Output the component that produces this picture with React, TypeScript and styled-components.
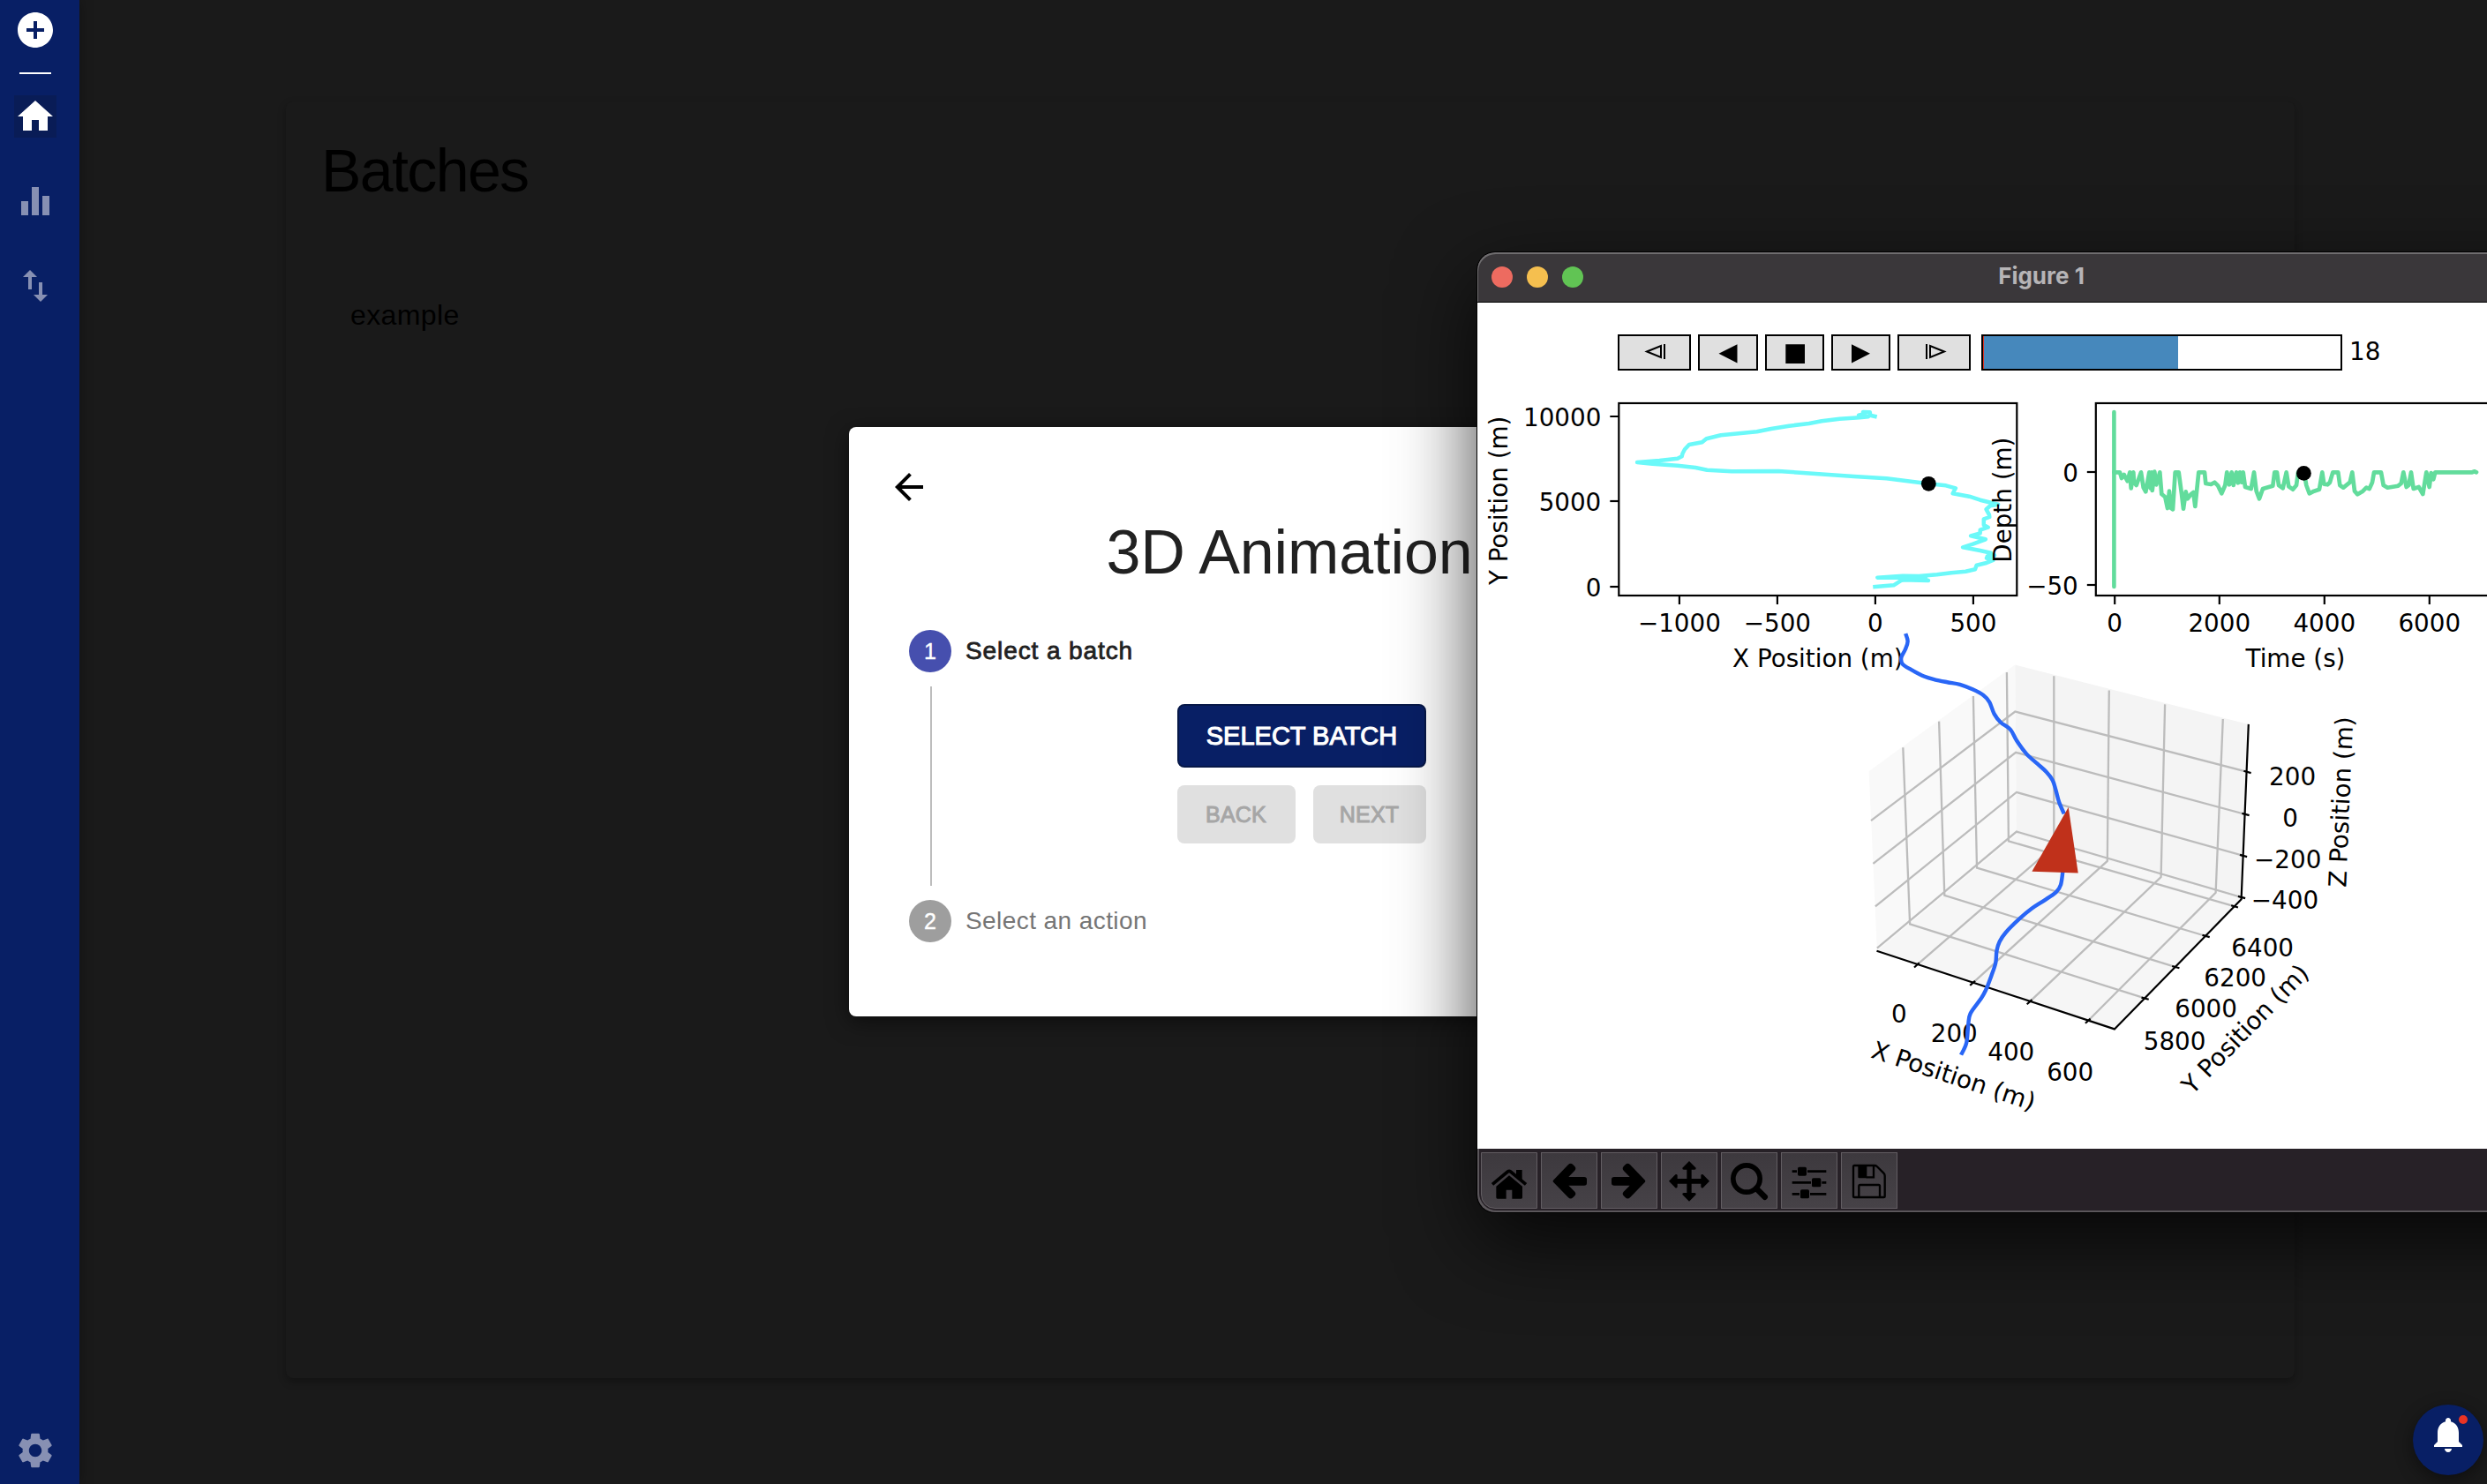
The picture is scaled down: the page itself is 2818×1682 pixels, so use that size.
import React from "react";
import styled, { createGlobalStyle } from "styled-components";

const GlobalStyle = createGlobalStyle`
  * { box-sizing: border-box; }
  html, body { margin: 0; padding: 0; background: #1a1a1a; overflow: hidden; }
  body { font-family: "Liberation Sans", Arial, sans-serif; }
`;

const NAVY = "#081f65";

const Shell = styled.div`
  position: relative;
  display: flex;
  width: 2818px;
  height: 1682px;
  overflow: hidden;
  background: #1a1a1a;
`;

/* ---------- Sidebar ---------- */

const Sidebar = styled.nav`
  display: flex;
  flex-direction: column;
  align-items: center;
  flex: none;
  width: 90px;
  padding: 10px 10px 14px 0;
  background: ${NAVY};
  box-shadow: 0 0 14px rgba(0, 0, 0, 0.35);
`;

const NavItem = styled.button<{ $active?: boolean; $gap?: number }>`
  display: flex;
  width: 48px;
  height: 48px;
  margin: ${(p) => p.$gap ?? 0}px 0 0;
  padding: 0;
  border: 0;
  color: ${(p) => (p.$active === false ? "#8790b3" : "#fff")};
  background: ${(p) => (p.$active ? "#091c56" : "transparent")};
`;

const NavDivider = styled.hr`
  width: 36px;
  height: 2px;
  margin: 24px 0 0;
  border: 0;
  background: #fff;
`;

const NavSpacer = styled.div`
  flex: 1;
`;

const Glyph = styled.svg<{ $size?: number }>`
  display: block;
  flex: none;
  width: ${(p) => p.$size ?? 48}px;
  height: ${(p) => p.$size ?? 48}px;
  fill: currentColor;
`;

const Icon = ({ d, size }: { d: string; size?: number }) => (
  <Glyph viewBox="0 0 24 24" $size={size}>
    <path d={d} />
  </Glyph>
);

const icons = {
  add: "M12 2C6.48 2 2 6.48 2 12s4.48 10 10 10 10-4.48 10-10S17.52 2 12 2zm5 11h-4v4h-2v-4H7v-2h4V7h2v4h4v2z",
  home: "M10 20v-6h4v6h5v-8h3L12 3 2 12h3v8z",
  bars: "M10 20h4V4h-4v16zm-6 0h4v-8H4v8zM16 9v11h4V9h-4z",
  swap: "M16 17.01V10h-2v7.01h-3L15 21l4-3.99h-3zM9 3L5 6.99h3V14h2V6.99h3L9 3z",
  gear: "M19.14 12.94c.04-.3.06-.61.06-.94 0-.32-.02-.64-.07-.94l2.03-1.58c.18-.14.23-.41.12-.61l-1.92-3.32c-.12-.22-.37-.29-.59-.22l-2.39.96c-.5-.38-1.03-.7-1.62-.94l-.36-2.54c-.04-.24-.24-.41-.48-.41h-3.84c-.24 0-.43.17-.47.41l-.36 2.54c-.59.24-1.13.57-1.62.94l-2.39-.96c-.22-.08-.47 0-.59.22L2.74 8.87c-.12.21-.08.47.12.61l2.03 1.58c-.05.3-.09.63-.09.94s.02.64.07.94l-2.03 1.58c-.18.14-.23.41-.12.61l1.92 3.32c.12.22.37.29.59.22l2.39-.96c.5.38 1.03.7 1.62.94l.36 2.54c.05.24.24.41.48.41h3.84c.24 0 .44-.17.47-.41l.36-2.54c.59-.24 1.13-.56 1.62-.94l2.39.96c.22.08.47 0 .59-.22l1.92-3.32c.12-.22.07-.47-.12-.61l-2.01-1.58zM12 15.6c-1.98 0-3.6-1.62-3.6-3.6s1.62-3.6 3.6-3.6 3.6 1.62 3.6 3.6-1.62 3.6-3.6 3.6z",
  back: "M20 11H7.83l5.59-5.59L12 4l-8 8 8 8 1.41-1.41L7.83 13H20v-2z",
  bell: "M12 22c1.1 0 2-.9 2-2h-4c0 1.1.89 2 2 2zm6-6v-5c0-3.07-1.64-5.64-4.5-6.32V4c0-.83-.67-1.5-1.5-1.5s-1.5.67-1.5 1.5v.68C7.63 5.36 6 7.92 6 11v5l-2 2v1h16v-1l-2-2z",
};

/* ---------- Page ---------- */

const Main = styled.main`
  flex: 1;
  display: flex;
  padding: 115px 218px 120px 234px;
`;

const Card = styled.section`
  flex: 1;
  padding: 36px 40px;
  border-radius: 8px;
  background: #1a1a1a;
  box-shadow: 0 4px 10px rgba(0, 0, 0, 0.3);
`;

const CardTitle = styled.h1`
  margin: 0;
  font-size: 68px;
  font-weight: 400;
  line-height: 84px;
  letter-spacing: -1.6px;
  color: #000;
`;

const BatchName = styled.p`
  margin: 98px 0 0 33px;
  font-size: 32px;
  line-height: 48px;
  letter-spacing: 0.4px;
  color: #000;
`;

/* ---------- Dialog ---------- */

const Dialog = styled.section`
  position: absolute;
  left: 962px;
  top: 484px;
  width: 998px;
  height: 668px;
  padding: 44px;
  border-radius: 8px;
  background: #fff;
  color: #212121;
  box-shadow: 0 6px 24px rgba(0, 0, 0, 0.5);
`;

const BackButton = styled.button`
  display: block;
  padding: 0;
  border: 0;
  background: none;
  color: #000;
`;

const DialogTitle = styled.h2`
  margin: 8px 0 46px;
  font-size: 70px;
  font-weight: 400;
  line-height: 84px;
  letter-spacing: -0.1px;
  text-align: center;
`;

const Stepper = styled.div`
  padding-left: 24px;
`;

const StepHead = styled.div<{ $active?: boolean }>`
  display: flex;
  align-items: center;
  gap: 16px;
  height: 48px;
  font-size: 28px;
  letter-spacing: ${(p) => (p.$active ? "0.9px" : "0.42px")};
  color: ${(p) => (p.$active ? "#212121" : "#757575")};
  -webkit-text-stroke: ${(p) => (p.$active ? "0.8px #212121" : "0")};
`;

const StepNumber = styled.span<{ $active?: boolean }>`
  display: flex;
  align-items: center;
  justify-content: center;
  width: 48px;
  height: 48px;
  border-radius: 50%;
  font-size: 25px;
  letter-spacing: 0;
  color: #fff;
  -webkit-text-stroke: 0.4px #fff;
  background: ${(p) => (p.$active ? "#464fae" : "#9e9e9e")};
`;

const StepBody = styled.div`
  display: flex;
  flex-direction: column;
  gap: 20px;
  height: 226px;
  margin: 16px 0 16px 24px;
  padding: 20px 0 0 278px;
  border-left: 2px solid #bdbdbd;
`;

const ButtonRow = styled.div`
  display: flex;
  gap: 20px;
`;

const SelectButton = styled.button`
  width: 282px;
  height: 72px;
  padding: 0;
  border: 2px solid #071848;
  border-radius: 8px;
  background: ${NAVY};
  color: #fff;
  font: 29px "Liberation Sans", Arial, sans-serif;
  letter-spacing: 0;
  -webkit-text-stroke: 1.1px #fff;
`;

const StepButton = styled.button<{ $width: number }>`
  width: ${(p) => p.$width}px;
  height: 66px;
  padding: 0 1px 0 0;
  border: 0;
  border-radius: 8px;
  background: #e0e0e0;
  color: #a6a6a6;
  font: 25px "Liberation Sans", Arial, sans-serif;
  letter-spacing: 0.2px;
  -webkit-text-stroke: 1px #a6a6a6;
`;

/* ---------- Figure window ---------- */

const Window = styled.section`
  position: absolute;
  left: 1674px;
  top: 286px;
  display: flex;
  flex-direction: column;
  width: 1280px;
  height: 1088px;
  border-radius: 20px;
  background: #272127;
  box-shadow: 0 0 0 1px #000, 0 32px 90px rgba(0, 0, 0, 0.75);
  overflow: hidden;
`;

const TitleBar = styled.header`
  display: flex;
  align-items: center;
  flex: none;
  height: 57px;
  padding: 0 16px;
  gap: 16px;
  border-bottom: 1px solid #000;
  border-radius: 20px 20px 0 0;
  background: #3a373a;
  box-shadow: inset 1px 2px 0 #6f6d6f;
`;

const Light = styled.span<{ $color: string }>`
  width: 24px;
  height: 24px;
  border-radius: 50%;
  background: ${(p) => p.$color};
`;

const WindowTitle = styled.span`
  flex: 1;
  padding: 0 122px 3px 0;
  text-align: center;
  font: 700 26px Inter, "Liberation Sans", sans-serif;
  color: #b6b4b6;
`;

const Figure = styled.div`
  flex: none;
  height: 959px;
  background: #fff;
`;

const Player = styled.div`
  display: flex;
  height: 77px;
  padding: 36px 0 0 159px;
`;

const PlayerButton = styled.button<{ $width: number }>`
  display: flex;
  flex: none;
  width: ${(p) => p.$width}px;
  height: 41px;
  margin-right: 8px;
  padding: 0;
  border: 2px solid #000;
  background: #e0e0e0;
`;

const PlayerGlyph = styled.svg`
  display: block;
  width: 100%;
  height: 100%;
  overflow: visible;
`;

const Track = styled.div`
  display: flex;
  width: 409px;
  height: 41px;
  margin-left: 4px;
  border: 2px solid #000;
`;

const TrackFill = styled.div`
  width: 221px;
  border-left: 1px solid #e0301e;
  background: #4688bc;
`;

const FrameCount = styled.span`
  margin-left: 8px;
  font: 27.78px/40px "DejaVu Sans", sans-serif;
  color: #000;
`;

const Plots = styled.svg`
  display: block;
  width: 1144px;
  height: 882px;
  text {
    font: 27.78px "DejaVu Sans", sans-serif;
    fill: #000;
  }
`;

const ToolBar = styled.footer`
  display: flex;
  flex: none;
  gap: 4px;
  height: 72px;
  padding: 4px;
  border-radius: 0 0 20px 20px;
  box-shadow: inset 2px -2px 0 #5b575b;
`;

const Tool = styled.button`
  width: 64px;
  height: 64px;
  padding: 0;
  border: 1px solid #625d62;
  background: linear-gradient(#3d393e, #464247);
  &:first-child {
    border-bottom-left-radius: 16px;
  }
`;

const ToolGlyph = styled.svg`
  display: block;
  width: 62px;
  height: 62px;
`;

const arrow =
  "M42 95 L93 42 Q101 35 109 42 L115 48 Q121 55 115 62 L94 84 H147 Q156 84 156 92 V105 Q156 113 147 113 H94 L115 134 Q121 141 115 148 L109 154 Q101 161 93 154 L42 101 Q40 98 42 95 Z";

const tools: Array<{ name: string; art: React.ReactNode }> = [
  {
    name: "home",
    art: (
      <>
        <path d="M120 60H140V98L120 82Z" />
        <path d="M39 109L91 66Q96 62 101 66L153 109" fill="none" stroke="#000" strokeWidth="11" />
        <path d="M96 79L141 116V154Q141 158 137 158H106V128H86V158H56Q52 158 52 154V116Z" />
      </>
    ),
  },
  { name: "back", art: <path d={arrow} /> },
  { name: "forward", art: <path d={arrow} transform="translate(192 0) scale(-1 1)" /> },
  {
    name: "pan",
    art: (
      <path d="M96 30L119 53Q120 59 114 59H104V90H136V78Q138 73 143 76L165 98L143 121Q138 123 136 118V107H104V138H114Q120 138 119 144L96 167L73 144Q72 138 78 138H88V107H56V118Q54 123 49 121L27 98L49 76Q54 73 56 78V90H88V59H78Q72 59 73 53Z" />
    ),
  },
  {
    name: "zoom",
    art: (
      <g fill="none" stroke="#000" strokeLinecap="round">
        <circle cx="87" cy="90" r="45.5" strokeWidth="17" />
        <path d="M120 123L149 152" strokeWidth="20" />
      </g>
    ),
  },
  {
    name: "configure",
    art: (
      <>
        <path d="M38 61H54V69H38ZM90 61H154V69H90ZM38 99H102V107H38ZM139 99H154V107H139ZM38 138H63V146H38ZM99 138H154V146H99Z" />
        <rect x="57" y="50" width="30" height="30" rx="5" />
        <rect x="105" y="88" width="31" height="30" rx="5" />
        <rect x="66" y="127" width="30" height="30" rx="5" />
      </>
    ),
  },
  {
    name: "save",
    art: (
      <>
        <path
          d="M46 45H114Q119 45 122 48L145 71Q149 75 149 80V149Q149 153 145 153H46Q42 153 42 149V49Q42 45 46 45Z"
          fill="none"
          stroke="#000"
          strokeWidth="7"
        />
        <path d="M58 45H88V88H62Q58 88 58 84Z" />
        <path d="M86 85H111V46" fill="none" stroke="#000" strokeWidth="7" />
        <path d="M61 153V115Q61 111 65 111H128Q132 111 132 115V153" fill="none" stroke="#000" strokeWidth="7" />
      </>
    ),
  },
];

/* ---------- Plot data ---------- */

type Pt = [number, number];

const pairs = (s: string): Pt[] => {
  const n = s.trim().split(/\s+/).map(Number);
  const out: Pt[] = [];
  for (let i = 0; i < n.length; i += 2) out.push([n[i], n[i + 1]]);
  return out;
};

const place = (pts: Pt[], ox: number, oy: number, sx: number, sy: number): Pt[] =>
  pts.map(([x, y]) => [ox + x / sx, oy + y / sy]);

const line = (pts: Pt[]) => "M" + pts.map((p) => p.map((v) => v.toFixed(1)).join(" ")).join("L");

const smooth = (pts: Pt[]) => {
  let d = `M${pts[0][0]} ${pts[0][1]}`;
  for (let i = 0; i < pts.length - 1; i++) {
    const a = pts[Math.max(i - 1, 0)];
    const b = pts[i];
    const c = pts[i + 1];
    const e = pts[Math.min(i + 2, pts.length - 1)];
    d += `C${b[0] + (c[0] - a[0]) / 6} ${b[1] + (c[1] - a[1]) / 6} ${c[0] - (e[0] - b[0]) / 6} ${c[1] - (e[1] - b[1]) / 6} ${c[0]} ${c[1]}`;
  }
  return d;
};

const trackXY = line(
  place(
    pairs(`1138 606 1125 602 1124 592 1105 591 1104 598 1093 602 1120 607 1095 610 1040 614 990 622 955 630 900 638 850 648
    810 658 760 664 710 670 670 682 658 694 622 702 610 718 604 732 602 742 590 749 540 756 478 762 520 767 590 773
    640 780 672 788 740 793 870 792 930 797 1000 803 1080 810 1170 817 1287 835 1335 841 1362 850 1354 868 1400 878
    1430 890 1480 905 1458 910 1447 922 1455 940 1456 948 1440 955 1440 975 1452 983 1430 992 1430 1003 1404 1012
    1445 1024 1410 1040 1382 1051 1430 1062 1460 1070 1450 1082 1470 1078 1448 1088 1466 1095 1445 1105 1420 1112
    1416 1126 1390 1133 1350 1138 1310 1144 1260 1149 1215 1148 1145 1154 1200 1154 1280 1150 1270 1158 1286 1164
    1215 1162 1250 1158 1212 1163 1190 1180 1138 1185`),
    1660,
    270,
    2.45,
    3
  )
);

const depthSeries = line(
  place(
    pairs(`46 106 66 106 72 126 80 114 92 136 100 106 104 160 112 106 114 140 122 150 138 106 146 158 154 172 166 106 170 160 174 106
    176 168 184 104 190 148 202 106 208 180 220 190 228 228 234 170 238 226 246 232 254 106 266 106 276 180 282 230 290 172 296 196
    308 180 316 174 322 222 334 106 354 106 358 144 376 147 388 140 400 152 412 178 424 150 430 106 438 148 446 106 452 150
    462 106 468 142 474 106 480 140 485 106 492 156 512 162 522 106 530 170 540 196 552 162 572 156 586 152 592 106 600 106
    606 150 620 160 632 106 640 154 654 164 666 150 672 106 692 106 700 150 710 178 726 170 744 164 754 106 760 146 772 148
    780 140 790 106 808 106 814 150 826 158 848 140 856 106 864 170 874 181 892 170 904 158 914 162 924 140 930 106 954 106
    962 150 976 158 1012 152 1022 144 1030 106 1040 156 1048 150 1056 106 1064 162 1082 156 1096 180 1108 106 1118 156
    1124 108 1132 130 1138 106 1264 106 1272 103 1278 106`),
    2380,
    500,
    3,
    3
  )
);

const sx = (x: number) => 2080 + x / 2.45;
const sy = (y: number) => 690 + y / 2.7034;
const in3d = (s: string) => place(pairs(s), 2080, 690, 2.45, 2.7034);

const pathTop = smooth(
  in3d(`194 76 200 100 193 125 182 150 186 170 210 187 245 207 275 217 310 225 345 232 380 247 410 265 427 286 440 322 458 348 485 370
  503 405 530 445 560 475 585 500 602 525 611 555 620 592 634 628`)
);
const pathBottom = smooth(
  in3d(`631 800 625 845 612 868 580 893 545 918 510 950 472 992 455 1020 447 1048 444 1085 432 1125 416 1170 403 1195 374 1240
  368 1275 363 1330 348 1367`)
);

const gridLines = [
  "475 195 480 712 1108 912",
  "382 268 392 794 1028 1003",
  "287 345 302 878 944 1098",
  "187 425 206 966 860 1194",
  "606 206 606 728 225 1092",
  "759 250 754 773 380 1147",
  "914 293 903 822 538 1205",
  "1075 338 1055 870 700 1263",
  "98 649 498 315 1144 500",
  "104 781 500 440 1138 630",
  "110 912 502 562 1132 757",
  "115 1040 502 683 1127 884",
];

const tickMarks = [
  "218 1099 232 1085",
  "373 1154 387 1140",
  "531 1212 545 1198",
  "693 1270 707 1256",
  "1098 909 1117 915",
  "1018 1000 1038 1006",
  "934 1095 954 1101",
  "849 1191 869 1197",
  "1133 497 1153 503",
  "1128 627 1148 633",
  "1122 754 1142 760",
  "1117 881 1137 887",
];

const labels3d: Array<[string, number, number]> = [
  ["200", 1268, 541],
  ["0", 1262, 669],
  ["−200", 1255, 796],
  ["−400", 1247, 920],
  ["6400", 1185, 1064],
  ["6200", 1109, 1158],
  ["6000", 1028, 1252],
  ["5800", 941, 1352],
  ["0", 176, 1267],
  ["200", 329, 1328],
  ["400", 487, 1384],
  ["600", 651, 1446],
];

const axisTitles: Array<[string, number, number, number]> = [
  ["Y Position (m)", 1699.5, 567.3, -90],
  ["Depth (m)", 2270.3, 566.7, -90],
  ["X Position (m)", 2213.4, 1220.3, 18.3],
  ["Y Position (m)", 2544.7, 1166.8, -45.7],
  ["Z Position (m)", 2653.5, 909, -87.6],
];

const AxisBox = ({ x, width }: { x: number; width: number }) => (
  <rect x={x} y={457} width={width} height={218} fill="none" stroke="#000" strokeWidth={2.2} />
);

const Ticks = ({ xs, ys, left }: { xs: Array<[string, number]>; ys: Array<[string, number]>; left: number }) => (
  <g stroke="#000" strokeWidth={2.2}>
    {xs.map(([t, x]) => (
      <React.Fragment key={t}>
        <line x1={x} x2={x} y1={675} y2={685} />
        <text x={x} y={715.5} textAnchor="middle" stroke="none">
          {t}
        </text>
      </React.Fragment>
    ))}
    {ys.map(([t, y]) => (
      <React.Fragment key={t}>
        <line x1={left - 10} x2={left} y1={y} y2={y} />
        <text x={left - 20} y={y + 10.8} textAnchor="end" stroke="none">
          {t}
        </text>
      </React.Fragment>
    ))}
  </g>
);

const PlotArea = () => (
  <Plots viewBox="1674 420 1144 882">
    <path d={line(in3d("498 172 92 498 115 1048 502 693")) + "Z"} fill="#f9f9f9" />
    <path d={line(in3d("498 172 1146 354 1126 890 502 693")) + "Z"} fill="#f4f4f4" />
    <path d={line(in3d("502 693 1126 890 774 1288 115 1048")) + "Z"} fill="#f6f6f6" />
    <g fill="none" stroke="#bcbcbc" strokeWidth={2.3}>
      {gridLines.map((g) => (
        <path key={g} d={line(in3d(g))} />
      ))}
    </g>
    <g fill="none" stroke="#000" strokeWidth={2.2}>
      <path d={line(in3d("114 1048 774 1288 1126 890 1146 354"))} />
      {tickMarks.map((g) => (
        <path key={g} d={line(in3d(g))} />
      ))}
    </g>
    {labels3d.map(([t, x, y]) => (
      <text key={t + x} x={sx(x)} y={sy(y)} textAnchor="middle">
        {t}
      </text>
    ))}

    <path d={trackXY} fill="none" stroke="#6bf9f9" strokeWidth={4.5} strokeLinejoin="round" strokeLinecap="square" />
    <circle cx={2185.3} cy={548.3} r={8.4} />
    <AxisBox x={1834.3} width={451} />
    <Ticks
      left={1834.3}
      xs={[
        ["−1000", 1902.9],
        ["−500", 2013.9],
        ["0", 2124.9],
        ["500", 2235.9],
      ]}
      ys={[
        ["10000", 472],
        ["5000", 568],
        ["0", 665],
      ]}
    />
    <text x={2059.8} y={755.8} textAnchor="middle">
      X Position (m)
    </text>

    <path d="M2395.4 467V665" stroke="#62dc9c" strokeWidth={4.6} strokeLinecap="round" />
    <path d={depthSeries} fill="none" stroke="#62dc9c" strokeWidth={4.7} strokeLinejoin="round" strokeLinecap="round" />
    <circle cx={2610.4} cy={536.4} r={8.4} />
    <AxisBox x={2374.8} width={451} />
    <Ticks
      left={2374.8}
      xs={[
        ["0", 2396.2],
        ["2000", 2514.8],
        ["4000", 2633.8],
        ["6000", 2752.8],
      ]}
      ys={[
        ["0", 535],
        ["−50", 663],
      ]}
    />
    <text x={2601} y={755.8} textAnchor="middle">
      Time (s)
    </text>

    {axisTitles.map(([t, x, y, r]) => (
      <text key={t + x} transform={`translate(${x} ${y}) rotate(${r})`} y={8.7} textAnchor="middle">
        {t}
      </text>
    ))}

    <g fill="none" stroke="#2966f6" strokeWidth={4.4}>
      <path d={pathTop} />
      <path d={pathBottom} />
    </g>
    <path d={line(in3d("646 608 673 810 545 805")) + "Z"} fill="#c0311b" />
  </Plots>
);

const PlayerControls = () => (
  <Player>
    <PlayerButton $width={83}>
      <PlayerGlyph viewBox="2 2 79 37">
        <path d="M33 19.5L49 13V26Z" fill="none" stroke="#000" strokeWidth="2" />
        <path d="M53 11V28" stroke="#000" strokeWidth="2" />
      </PlayerGlyph>
    </PlayerButton>
    <PlayerButton $width={68}>
      <PlayerGlyph viewBox="2 2 64 37">
        <path d="M23.5 21.8L44.5 11.2V32.4Z" />
      </PlayerGlyph>
    </PlayerButton>
    <PlayerButton $width={67}>
      <PlayerGlyph viewBox="2 2 63 37">
        <path d="M23.3 11.2H45V33H23.3Z" />
      </PlayerGlyph>
    </PlayerButton>
    <PlayerButton $width={67}>
      <PlayerGlyph viewBox="2 2 63 37">
        <path d="M44 21.8L23 11.2V32.4Z" />
      </PlayerGlyph>
    </PlayerButton>
    <PlayerButton $width={83}>
      <PlayerGlyph viewBox="2 2 79 37">
        <path d="M53 19.5L37 13V26Z" fill="none" stroke="#000" strokeWidth="2" />
        <path d="M33 11V28" stroke="#000" strokeWidth="2" />
      </PlayerGlyph>
    </PlayerButton>
    <Track>
      <TrackFill />
    </Track>
    <FrameCount>18</FrameCount>
  </Player>
);

/* ---------- Notifications ---------- */

const Fab = styled.button`
  position: absolute;
  left: 2734px;
  top: 1592px;
  display: flex;
  justify-content: center;
  width: 80px;
  height: 80px;
  padding: 10px 0 0;
  border: 0;
  border-radius: 50%;
  background: ${NAVY};
  color: #fff;
  box-shadow: 0 6px 20px rgba(0, 0, 0, 0.45);
`;

const Badge = styled.span`
  position: absolute;
  left: 52px;
  top: 12px;
  width: 10px;
  height: 10px;
  border-radius: 50%;
  background: #ea3323;
`;

export default function App() {
  return (
    <>
      <GlobalStyle />
      <Shell>
        <Sidebar>
          <NavItem>
            <Icon d={icons.add} />
          </NavItem>
          <NavDivider />
          <NavItem $active $gap={24}>
            <Icon d={icons.home} />
          </NavItem>
          <NavItem $active={false} $gap={48}>
            <Icon d={icons.bars} />
          </NavItem>
          <NavItem $active={false} $gap={48}>
            <Icon d={icons.swap} />
          </NavItem>
          <NavSpacer />
          <NavItem $active={false}>
            <Icon d={icons.gear} />
          </NavItem>
        </Sidebar>

        <Main>
          <Card>
            <CardTitle>Batches</CardTitle>
            <BatchName>example</BatchName>
          </Card>
        </Main>

        <Dialog>
          <BackButton>
            <Icon d={icons.back} />
          </BackButton>
          <DialogTitle>3D Animation</DialogTitle>
          <Stepper>
            <StepHead $active>
              <StepNumber $active>1</StepNumber>
              Select a batch
            </StepHead>
            <StepBody>
              <SelectButton>SELECT BATCH</SelectButton>
              <ButtonRow>
                <StepButton $width={134}>BACK</StepButton>
                <StepButton $width={128}>NEXT</StepButton>
              </ButtonRow>
            </StepBody>
            <StepHead>
              <StepNumber>2</StepNumber>
              Select an action
            </StepHead>
          </Stepper>
        </Dialog>

        <Fab>
          <Icon d={icons.bell} />
          <Badge />
        </Fab>

        <Window>
          <TitleBar>
            <Light $color="#ed6b60" />
            <Light $color="#f5bf4f" />
            <Light $color="#61c454" />
            <WindowTitle>Figure 1</WindowTitle>
          </TitleBar>
          <Figure>
            <PlayerControls />
            <PlotArea />
          </Figure>
          <ToolBar>
            {tools.map((t) => (
              <Tool key={t.name}>
                <ToolGlyph viewBox="3 3 186 186">{t.art}</ToolGlyph>
              </Tool>
            ))}
          </ToolBar>
        </Window>
      </Shell>
    </>
  );
}
